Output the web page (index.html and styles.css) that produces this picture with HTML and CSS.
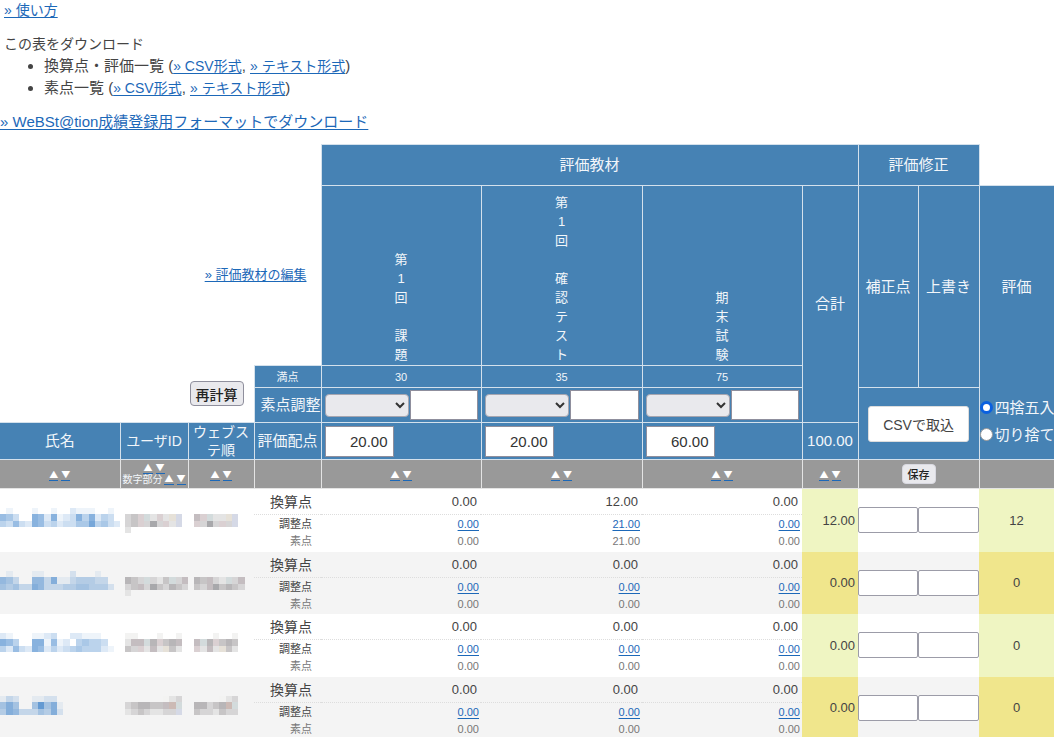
FILE: index.html
```html
<!DOCTYPE html>
<html lang="ja">
<head>
<meta charset="utf-8">
<title>成績評価</title>
<link rel="stylesheet" href="styles.css">
</head>
<body>
<header class="intro">
  <p class="help"><a href="#help">» 使い方</a></p>
  <p>この表をダウンロード</p>
  <ul class="downloads">
    <li>換算点・評価一覧 (<a href="#c1">» CSV形式</a>, <a href="#t1">» テキスト形式</a>)</li>
    <li>素点一覧 (<a href="#c2">» CSV形式</a>, <a href="#t2">» テキスト形式</a>)</li>
  </ul>
  <p class="station"><a href="#ws">» WeBSt@tion成績登録用フォーマットでダウンロード</a></p>
</header>
<table class="grades">
  <colgroup>
    <col class="c-name"><col class="c-id"><col class="c-web"><col class="c-label">
    <col class="c-item"><col class="c-item-mid"><col class="c-item"><col class="c-total">
    <col class="c-fix"><col class="c-over"><col class="c-grade">
  </colgroup>
  <thead>
    <tr class="r-group">
      <td colspan="4" class="blank"></td>
      <th colspan="4">評価教材</th>
      <th colspan="2">評価修正</th>
      <td class="blank"></td>
    </tr>
    <tr class="r-items">
      <td colspan="4" class="blank edit"><a href="#edit">» 評価教材の編集</a></td>
      <th class="vert">第<br>1<br>回<br><br>課<br>題</th>
      <th class="vert">第<br>1<br>回<br><br>確<br>認<br>テ<br>ス<br>ト</th>
      <th class="vert">期<br>末<br>試<br>験</th>
      <th rowspan="3">合計</th>
      <th rowspan="2">補正点</th>
      <th rowspan="2">上書き</th>
      <th rowspan="2" class="grade-head">評価</th>
    </tr>
    <tr class="r-full">
      <td colspan="3" rowspan="2" class="blank recalc"><button class="btn" type="button">再計算</button></td>
      <th class="small">満点</th>
      <th class="small">30</th><th class="small">35</th><th class="small">75</th>
    </tr>
    <tr class="r-adjust">
      <th class="tight end">素点調整</th>
      <td class="ctl"><div class="pair"><select aria-label="第1回 課題 調整方法"><option></option></select><input type="text" aria-label="第1回 課題 調整値"></div></td>
      <td class="ctl"><div class="pair"><select aria-label="第1回 確認テスト 調整方法"><option></option></select><input type="text" aria-label="第1回 確認テスト 調整値"></div></td>
      <td class="ctl"><div class="pair"><select aria-label="期末試験 調整方法"><option></option></select><input type="text" aria-label="期末試験 調整値"></div></td>
      <td colspan="2" rowspan="2" class="import"><button class="btn-csv" type="button">CSVで取込</button></td>
      <td rowspan="2" class="rounding">
        <label><input type="radio" name="round" checked>四捨五入</label>
        <label><input type="radio" name="round">切り捨て</label>
      </td>
    </tr>
    <tr class="r-weight">
      <th>氏名</th><th class="mid">ユーザID</th><th class="mid">ウェブステ順</th><th class="tight">評価配点</th>
      <td class="ctl"><input class="weight" type="text" value="20.00" aria-label="第1回 課題 評価配点"></td>
      <td class="ctl"><input class="weight" type="text" value="20.00" aria-label="第1回 確認テスト 評価配点"></td>
      <td class="ctl"><input class="weight" type="text" value="60.00" aria-label="期末試験 評価配点"></td>
      <td>100.00</td>
    </tr>
    <tr class="r-sort">
      <td><span class="sort"><a href="#a">▲</a><a href="#d">▼</a></span></td>
      <td class="id-sort"><span class="sort"><a href="#a">▲</a><a href="#d">▼</a></span><div class="digits">数字部分<span class="sort"><a href="#a">▲</a><a href="#d">▼</a></span></div></td>
      <td><span class="sort"><a href="#a">▲</a><a href="#d">▼</a></span></td>
      <td></td>
      <td><span class="sort"><a href="#a">▲</a><a href="#d">▼</a></span></td>
      <td><span class="sort"><a href="#a">▲</a><a href="#d">▼</a></span></td>
      <td><span class="sort"><a href="#a">▲</a><a href="#d">▼</a></span></td>
      <td><span class="sort"><a href="#a">▲</a><a href="#d">▼</a></span></td>
      <td colspan="2"><button class="btn btn-save" type="button">保存</button></td>
      <td></td>
    </tr>
  </thead>
  <tbody id="rows"></tbody>
</table>
<script src="rows.js"></script>
</body>
</html>
```
FILE: rows.js
```js
// Masked names and IDs: one character per mosaic tile. Digits are blue tints.
const greys = {
  a: '#f3f3f2', g: '#e4e4e4', l: '#d6d5d6', m: '#c7c5c6', n: '#b8b6b8', d: '#a8a8ab',
  p: '#dad0d2', r: '#c4bdc0', y: '#e6e1d8', b: '#d5d9e6', c: '#d3dbdc', o: '#ccbab5'
};
const students = [
  {
    name: ['0100010010021110010', '6530076271237472430', '4363276342335584532'],
    id: ['.........', 'lmpcgpgyb', 'lmpldlpgb', 'g........'],
    web: ['.......', 'rpcggyb', 'pldlplb'],
    s: [['0.00', '0.00'], ['12.00', '21.00'], ['0.00', '0.00']], total: '12.00', grade: '12'
  },
  {
    name: ['0100011000020001000', '6530066371134443300', '5453376333445544420'],
    id: ['..........', 'nmlclgmclr', 'lmrldmlnml', 'g.........'],
    web: ['........', 'nmrlgclr', 'mlrdmnml'],
    s: [['0.00', '0.00'], ['0.00', '0.00'], ['0.00', '0.00']], total: '0.00', grade: '0'
  },
  {
    name: ['2100011230022111000', '7640077161204544300', '4263276242345444210'],
    id: ['aa...a..a', 'grrcnpmnr', 'mlpgrgymg'],
    web: ['...a..a', 'rcnpmnm', 'pgrgymg'],
    s: [['0.00', '0.00'], ['0.00', '0.00'], ['0.00', '0.00']], total: '0.00', grade: '0'
  },
  {
    name: ['1320011220000000000', '5750059571000000000', '4763335472000000000'],
    id: ['......agl', 'lmnnmmroc', 'glmlggllb'],
    web: ['....agl', 'nnlmnoc', 'mllgmll'],
    s: [['0.00', '0.00'], ['0.00', '0.00'], ['0.00', '0.00']], total: '0.00', grade: '0'
  }
];

function mosaic(lines, cls) {
  const w = Math.max(...lines.map(l => l.length));
  let out = '';
  lines.forEach((line, y) => [...line].forEach((ch, x) => {
    if (ch === '0' || ch === '.') return;
    const paint = greys[ch] ? `fill="${greys[ch]}"` : `fill="#4486cb" fill-opacity="${ch / 11}"`;
    out += `<rect x="${x * 25}" y="${y * 25}" width="25" height="25" ${paint}/>`;
  }));
  return `<svg class="mosaic ${cls}" viewBox="0 0 ${w * 25} 75" aria-hidden="true" shape-rendering="crispEdges">${out}</svg>`;
}

document.getElementById('rows').innerHTML = students.map((st, i) => `
  <tr>
    <td class="masked">${mosaic(st.name, 'm-name')}</td>
    <td class="masked">${mosaic(st.id, 'm-id')}</td>
    <td class="masked">${mosaic(st.web, 'm-web')}</td>
    <td class="scores labels"><div class="conv">換算点</div><div class="adj">調整点</div><div class="raw">素点</div></td>
    ${st.s.map(v => {
      return `<td class="scores"><div class="conv">${v[0]}</div><div class="adj"><a href="#s">${v[1]}</a></div><div class="raw">${v[1]}</div></td>`;
    }).join('')}
    <td class="total">${st.total}</td>
    <td class="entry"><input type="text" aria-label="補正点 ${i + 1}"></td>
    <td class="entry"><input type="text" aria-label="上書き ${i + 1}"></td>
    <td class="grade">${st.grade}</td>
  </tr>`).join('');
```
FILE: styles.css
```css
* { box-sizing: border-box; }
html { scrollbar-width: none; }
body {
  margin: 0;
  background: #fff;
  color: #444;
  font: 15px/21px "Liberation Sans", "Noto Sans CJK JP", sans-serif;
}
a { color: #1c68b8; text-underline-offset: 2px; }
p { margin: 0; }
input, select, button { font-family: inherit; color: #333; margin: 0; }

.intro { padding-bottom: 12px; font-size: 14px; }
.intro p { padding-left: 4px; }
.intro .help { padding-bottom: 13px; }
.intro .station { padding: 12px 0 0; font-size: 15px; }
.downloads { margin: 0; padding-left: 44px; font-size: 15px; line-height: 22px; }
.downloads a { font-size: 14px; }

.grades { width: 100%; table-layout: fixed; border-collapse: collapse; }
.c-name { width: 120px; }
.c-id { width: 68px; }
.c-web { width: 66px; }
.c-label { width: 67px; }
.c-item { width: 160px; }
.c-item-mid { width: 161px; }
.c-total { width: 56px; }
.c-fix { width: 60px; }
.c-over { width: 61px; }
.c-grade { width: 75px; }

.grades th, .grades td { padding: 0; font-weight: normal; text-align: center; vertical-align: middle; }
thead th, thead td { background: #4682b4; border: 1px solid #d4e1ec; color: #f2f6fa; line-height: 20px; }
thead .blank { background: none; border: 0; }
.r-group { height: 41px; }
.r-items { height: 180px; }
.r-full { height: 22px; }
.r-adjust { height: 35px; }
.r-weight { height: 37px; }
.r-sort { height: 29px; }
.r-weight > :first-child, .r-sort > :first-child { border-left: 0; }

.grades .vert { vertical-align: bottom; font-size: 13px; line-height: 19px; padding-bottom: 1px; }
.grades .edit { text-align: right; padding-right: 14px; font-size: 13px; }
.grades .recalc { text-align: right; padding-right: 10px; }
.grades .small { font-size: 11px; line-height: 18px; }
.grades .mid { font-size: 14px; line-height: 18px; }
.grades .tight { white-space: nowrap; overflow: hidden; }
.grades .end { text-align: right; }
.grades .grade-head { border-bottom: 0; }

.btn {
  height: 25px;
  padding: 0 5px;
  border: 1px solid #8f8f9d;
  border-radius: 4px;
  background: #e9e9ed;
  color: #222;
  font-size: 14px;
  font-weight: 500;
}
.btn-save { height: 20px; font-size: 11px; border-color: #d8d8e0; display: block; margin: 0 auto; }
.btn-csv {
  height: 36px;
  padding: 0 14px;
  border: 1px solid #ddd;
  border-radius: 3px;
  background: #fff;
  color: #444;
  font-size: 14px;
  white-space: nowrap;
}

.grades .ctl { text-align: left; padding: 0 3px; }
.pair { display: flex; align-items: center; gap: 1px; }
.pair select {
  width: 55%;
  height: 23px;
  border: 1px solid #a5a5b0;
  border-radius: 4px;
  background: #e9e9ed;
}
.pair input { flex: 1; min-width: 0; height: 30px; }
.pair input, .weight { border: 1px solid #8f8f9d; background: #fff; }
.weight { display: block; width: 69px; height: 31px; padding: 0 5px; text-align: right; font-size: 15px; }

.grades .rounding { border-top: 0; text-align: left; white-space: nowrap; vertical-align: top; padding-top: 6px; overflow: hidden; }
.rounding label { display: flex; align-items: center; gap: 2px; line-height: 27px; }
.rounding input {
  appearance: none;
  flex: none;
  width: 13px;
  height: 13px;
  border: 1px solid #999;
  border-radius: 50%;
  background: #fff;
}
.rounding input:checked { border: 3px solid #0a60df; }

.r-sort td { background: #999; border-color: #e4e4e4; line-height: 13px; }
.sort { display: inline-flex; gap: 3px; font: 9px/10px "Noto Sans CJK JP", sans-serif; vertical-align: middle; }
.sort a { color: #fff; text-decoration: none; border-bottom: 1px solid #1c68b8; }
.digits { display: flex; justify-content: center; align-items: center; gap: 2px; font-size: 10px; line-height: 12px; white-space: nowrap; }
.id-sort > .sort { display: flex; justify-content: center; }

tbody tr { height: 62px; }
tbody tr:nth-child(odd) { height: 63px; }
tbody tr:nth-child(even) { background: #f4f4f4; }
.grades .scores { text-align: right; vertical-align: top; }
.scores div { padding-right: 2px; }
.scores .conv { height: 26px; line-height: 26px; padding-right: 4px; border-bottom: 1px dotted #ddd; font-size: 13px; }
.scores .adj { font-size: 11px; line-height: 18px; }
.scores .raw { font-size: 11px; line-height: 17px; color: #777; }
.labels.scores div { padding-right: 9px; }
.labels.scores .conv { font-size: 14px; }
.grades .total { background: #eff5c2; text-align: right; padding-right: 3px; font-size: 13px; }
.grades .grade { background: #eff5c2; font-size: 13px; }
tbody tr:nth-child(even) .total, tbody tr:nth-child(even) .grade { background: #f0e68c; }
.entry input { display: block; width: 100%; height: 26px; border: 1px solid #9c9ca8; border-radius: 2px; background: #fff; }
.grades .masked { text-align: left; vertical-align: top; padding-top: 19px; }
.mosaic { display: block; height: 19px; overflow: visible; }
.m-id { margin-left: 5px; }
.m-web { margin-left: 6px; }
```
